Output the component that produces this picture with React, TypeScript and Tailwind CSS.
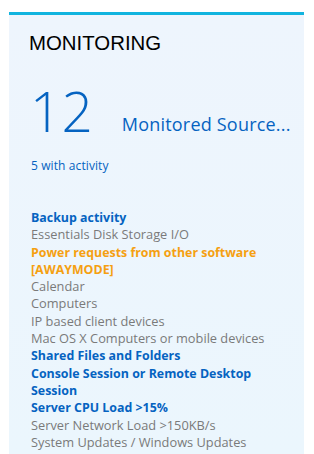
import React from 'react';

// Sources shown in the monitoring tile
type Tone = 'active' | 'warn' | 'idle';

interface Source {
  label: string;
  tone: Tone;
}

const sources: Source[] = [
  { label: 'Backup activity', tone: 'active' },
  { label: 'Essentials Disk Storage I/O', tone: 'idle' },
  { label: 'Power requests from other software [AWAYMODE]', tone: 'warn' },
  { label: 'Calendar', tone: 'idle' },
  { label: 'Computers', tone: 'idle' },
  { label: 'IP based client devices', tone: 'idle' },
  { label: 'Mac OS X Computers or mobile devices', tone: 'idle' },
  { label: 'Shared Files and Folders', tone: 'active' },
  { label: 'Console Session or Remote Desktop Session', tone: 'active' },
  { label: 'Server CPU Load >15%', tone: 'active' },
  { label: 'Server Network Load >150KB/s', tone: 'idle' },
  { label: 'System Updates / Windows Updates', tone: 'idle' },
];

const toneClass: Record<Tone, string> = {
  active: 'font-bold text-[12.4px] text-[#0563c1]',
  warn: 'font-bold text-[12.4px] text-[#f5a011]',
  idle: 'text-[12.8px] text-[#7a7a7a]',
};

export default function App() {
  return (
    <div className="w-[314px] h-[454px] bg-white pt-3 pl-[9px] overflow-hidden">
      <div className="w-[295px] h-[442px] border-t-[3px] border-[#12b4df] bg-gradient-to-b from-[#eef5fd] to-[#ebf6fd] pl-[22px] font-['Open_Sans',sans-serif]">
        <h2 className="pt-[16px] -ml-[2px] text-[20.4px] leading-6 text-black font-['Liberation_Sans',sans-serif]">
          MONITORING
        </h2>
        <div className="flex items-end mt-[28px]">
          <span className="text-[55px] leading-[55px] font-light text-[#0563c1] -ml-[1px]">12</span>
          <span className="ml-[29px] mb-[2px] text-[18px] leading-6 tracking-[0.2px] text-[#0563c1]">
            Monitored Source...
          </span>
        </div>
        <p className="mt-[20px] text-[12px] leading-4 tracking-[0.1px] text-[#0563c1]">5 with activity</p>
        <ul className="mt-[35px] leading-[17.3px] pr-5">
          {sources.map((s) => (
            <li key={s.label} className={toneClass[s.tone]}>
              {s.label}
            </li>
          ))}
        </ul>
      </div>
    </div>
  );
}
